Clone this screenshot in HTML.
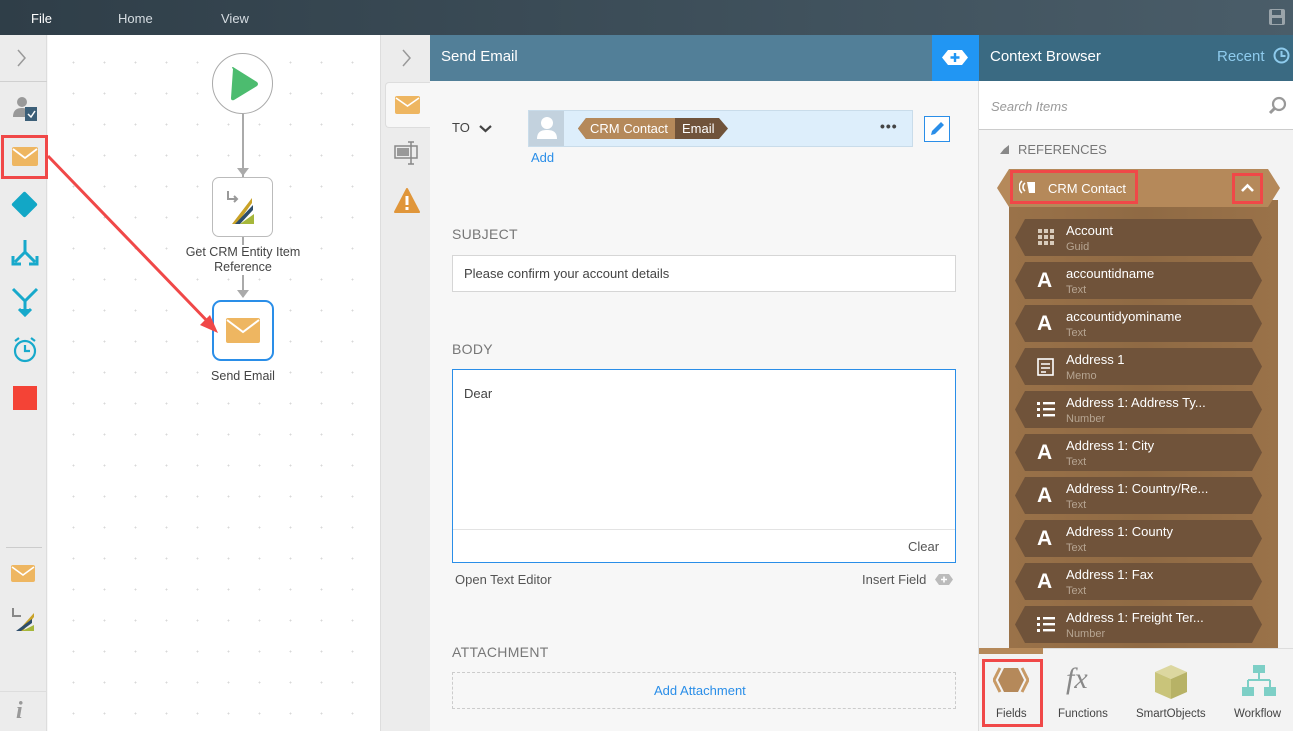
<!DOCTYPE html>
<html><head><meta charset="utf-8"><style>
*{margin:0;padding:0;box-sizing:border-box}
body{width:1293px;height:731px;overflow:hidden;position:relative;font-family:"Liberation Sans",sans-serif;font-size:13px;color:#333;background:#f7f7f7}
.a{position:absolute}
.top{left:0;top:0;width:1293px;height:35px;background:linear-gradient(90deg,#2f3e48,#4a5d69)}
.top span{position:absolute;top:11px;color:#d6dde2;font-size:13px}
.item{position:absolute;left:1015px;width:247px;height:37px;background:#70533a;clip-path:polygon(10px 0,237px 0,247px 50%,237px 100%,10px 100%,0 50%)}
.item .t{position:absolute;left:51px;top:4px;color:#fff;font-size:13px}
.item .s{position:absolute;left:51px;top:22px;color:#b6a592;font-size:11px}
.item .A{position:absolute;left:22px;top:7px;color:#fff;font-weight:bold;font-size:21px}
.lbl{position:absolute;color:#777;font-size:14px;letter-spacing:.3px}
.red{position:absolute;border:3px solid #f04848}
</style></head><body>
<div class="a top"><span style="left:31px;color:#fff">File</span><span style="left:118px">Home</span><span style="left:221px">View</span>
<svg class="a" style="left:1268px;top:8px" width="18" height="18"><rect x="1" y="1" width="16" height="16" rx="2" fill="#9aa4aa"/><rect x="4" y="2" width="9" height="5" fill="#4a5d69"/><rect x="4" y="10" width="10" height="6" fill="#4a5d69"/></svg></div>

<!-- left toolbar -->
<div class="a" style="left:0;top:35px;width:47px;height:696px;background:#ececec;border-right:1px solid #ddd"></div>
<div class="a" style="left:0;top:81px;width:47px;height:1px;background:#d0d0d0"></div>
<svg class="a" style="left:17px;top:49px" width="10" height="18"><path d="M1 1l7 8-7 8" stroke="#999" stroke-width="1.5" fill="none"/></svg>
<svg class="a" style="left:11px;top:95px" width="28" height="28"><circle cx="11" cy="7" r="5" fill="#999"/><path d="M2 22c0-7 4-9 9-9s8 2 8 9z" fill="#999"/><rect x="14" y="12" width="12" height="14" fill="#3c5f78"/><path d="M17 19l3 3 4-6" stroke="#fff" stroke-width="1.5" fill="none"/></svg>
<div class="red" style="left:1px;top:135px;width:47px;height:44px"></div>
<svg class="a" style="left:12px;top:147px" width="26" height="19"><rect width="26" height="19" rx="2" fill="#eeb661"/><path d="M1 2l12 9 12-9" stroke="#fff" stroke-width="1.8" fill="none"/></svg>
<div class="a" style="left:15px;top:195px;width:19px;height:19px;background:#12a7c6;transform:rotate(45deg);border-radius:2px"></div>
<svg class="a" style="left:10px;top:240px" width="30" height="28" fill="none" stroke="#17a9cb" stroke-width="3"><path d="M15 0v12l-10 10M15 12l10 10"/><path d="M3 16v8h8M27 16v8h-8"/></svg>
<svg class="a" style="left:10px;top:287px" width="30" height="30" fill="none" stroke="#17a9cb" stroke-width="3"><path d="M3 2l12 12 12-12M15 14v10"/><path d="M9 22l6 6 6-6" fill="#17a9cb"/></svg>
<svg class="a" style="left:12px;top:336px" width="28" height="28" fill="none" stroke="#17a9cb" stroke-width="2.2"><circle cx="13" cy="15" r="10"/><path d="M13 9v6h5M3 5l4-3M23 5l-4-3"/></svg>
<div class="a" style="left:13px;top:386px;width:24px;height:24px;background:#f44336"></div>
<div class="a" style="left:6px;top:547px;width:36px;height:1px;background:#ccc"></div>
<svg class="a" style="left:11px;top:565px" width="24" height="17"><rect width="24" height="17" rx="2" fill="#eeb661"/><path d="M1 2l11 8 11-8" stroke="#fff" stroke-width="1.6" fill="none"/></svg>
<svg class="a" style="left:10px;top:606px" width="26" height="26"><path d="M3 2v8h8" stroke="#888" stroke-width="2" fill="none"/><path d="M8 25L24 7v4L13 25z" fill="#c9a227"/><path d="M6 25L22 13v4L11 25z" fill="#2d4d6b"/><path d="M12 25l12-6v6z" fill="#a6b73a"/></svg>
<div class="a" style="left:0;top:691px;width:47px;height:1px;background:#ddd"></div>
<div class="a" style="left:16px;top:698px;color:#999;font-size:24px;font-style:italic;font-family:'Liberation Serif',serif;font-weight:bold">i</div>

<!-- canvas -->
<div class="a" style="left:48px;top:35px;width:332px;height:696px;background-color:#fff;background-image:radial-gradient(#d8d8d8 0.8px,transparent 1px);background-size:31px 31px;background-position:10px 12px"></div>
<div class="a" style="left:212px;top:53px;width:61px;height:61px;border:1px solid #aaa;border-radius:50%;background:#fff"></div>
<svg class="a" style="left:230px;top:66px" width="30" height="36"><path d="M3 3Q1 1 3 1L27 16q2 2 0 4L4 34q-3 1-3-2z" fill="#4cbc6f"/></svg>
<div class="a" style="left:242px;top:114px;width:2px;height:64px;background:#aaa"></div>
<div class="a" style="left:237px;top:168px;border:6px solid transparent;border-top:8px solid #aaa"></div>
<div class="a" style="left:212px;top:177px;width:61px;height:60px;border:1px solid #bbb;border-radius:7px;background:#fff"></div>
<svg class="a" style="left:225px;top:190px" width="36" height="36"><path d="M3 1v8h8M9 6l3 3-3 3" stroke="#999" stroke-width="2" fill="none"/><path d="M7 34L27 8v5L12 34z" fill="#c9a227"/><path d="M10 34L28 15v5L15 34z" fill="#2d4d6b"/><path d="M15 34l14-10v10z" fill="#a6b73a"/></svg>
<div class="a" style="left:160px;top:245px;width:166px;text-align:center;color:#444;font-size:12.5px;line-height:15px">Get CRM Entity Item<br>Reference</div>
<div class="a" style="left:242px;top:237px;width:2px;height:8px;background:#aaa"></div>
<div class="a" style="left:242px;top:275px;width:2px;height:22px;background:#aaa"></div>
<div class="a" style="left:237px;top:290px;border:6px solid transparent;border-top:8px solid #aaa"></div>
<div class="a" style="left:212px;top:300px;width:62px;height:61px;border:2px solid #2a8ee8;border-radius:9px;background:#fff"></div>
<svg class="a" style="left:226px;top:318px" width="34" height="25"><rect width="34" height="25" rx="2" fill="#eeb661"/><path d="M1 2l16 12 16-12" stroke="#fff" stroke-width="2" fill="none"/></svg>
<div class="a" style="left:180px;top:369px;width:126px;text-align:center;color:#444;font-size:12.5px">Send Email</div>
<svg class="a" style="left:40px;top:150px" width="180" height="190"><path d="M8 6L172 176" stroke="#f04848" stroke-width="3"/><path d="M178 183l-18-8 10-10z" fill="#f04848"/></svg>

<!-- right strip -->
<div class="a" style="left:380px;top:35px;width:50px;height:696px;background:#ececec;border-left:1px solid #ddd"></div>
<svg class="a" style="left:402px;top:49px" width="10" height="18"><path d="M1 1l7 8-7 8" stroke="#999" stroke-width="1.5" fill="none"/></svg>
<div class="a" style="left:385px;top:82px;width:46px;height:46px;background:#f7f7f7;border:1px solid #ddd;border-right:none;border-radius:4px 0 0 4px"></div>
<svg class="a" style="left:395px;top:96px" width="25" height="18"><rect width="25" height="18" rx="2" fill="#eeb661"/><path d="M1 2l11.5 8 11.5-8" stroke="#fff" stroke-width="1.6" fill="none"/></svg>
<svg class="a" style="left:394px;top:141px" width="26" height="24" fill="none" stroke="#888" stroke-width="1.5"><rect x="1" y="5" width="22" height="12"/><rect x="3" y="7" width="12" height="8" fill="#999" stroke="none"/><path d="M17 1v22M14 1h6M14 23h6"/></svg>
<svg class="a" style="left:394px;top:188px" width="26" height="26"><path d="M13 1L25 24H1z" fill="#e0963a" stroke="#e0963a" stroke-linejoin="round" stroke-width="2"/><rect x="11.5" y="8" width="3" height="9" fill="#fff"/><rect x="11.5" y="19" width="3" height="3" fill="#fff"/></svg>

<!-- send email panel -->
<div class="a" style="left:430px;top:35px;width:502px;height:46px;background:#527f98"></div>
<div class="a" style="left:441px;top:48px;color:#fff;font-size:15px">Send Email</div>
<div class="a" style="left:932px;top:35px;width:47px;height:46px;background:#2196f3"></div>
<svg class="a" style="left:942px;top:50px" width="26" height="15"><path d="M6 0h14l6 7.5-6 7.5H6L0 7.5z" fill="#fff"/><path d="M13 3v9M8.5 7.5h9" stroke="#2196f3" stroke-width="2.4"/></svg>
<div class="a" style="left:430px;top:81px;width:549px;height:650px;background:#f7f7f7;border-right:1px solid #ddd"></div>
<div class="a" style="left:452px;top:120px;font-size:13px;color:#444">TO</div>
<svg class="a" style="left:478px;top:124px" width="15" height="10"><path d="M2 2l5.5 5 5.5-5" stroke="#444" stroke-width="2.2" fill="none"/></svg>
<div class="a" style="left:528px;top:110px;width:385px;height:37px;background:#ddeefb;border:1px solid #c9dcea"></div>
<div class="a" style="left:529px;top:111px;width:35px;height:35px;background:#c3d2de"></div>
<svg class="a" style="left:535px;top:115px" width="24" height="26"><circle cx="12" cy="8" r="6" fill="#fff"/><path d="M2 24c0-7 4-9 10-9s10 2 10 9z" fill="#fff"/></svg>
<div class="a" style="left:578px;top:118px;width:150px;height:21px;background:#70533a;clip-path:polygon(8px 0,141px 0,150px 50%,141px 100%,8px 100%,0 50%)"></div>
<div class="a" style="left:578px;top:118px;width:97px;height:21px;background:#b5895a;clip-path:polygon(8px 0,97px 0,97px 100%,8px 100%,0 50%)"></div>
<div class="a" style="left:590px;top:121px;color:#fff;font-size:13px">CRM Contact</div>
<div class="a" style="left:682px;top:121px;color:#fff;font-size:13px">Email</div>
<div class="a" style="left:880px;top:118px;color:#444;font-size:14px;font-weight:bold;letter-spacing:1px">•••</div>
<div class="a" style="left:924px;top:116px;width:26px;height:26px;border:1px solid #2a8ee8;background:#fff"></div>
<svg class="a" style="left:928px;top:119px" width="19" height="19"><path d="M3 16l1-4L13 3l3 3-9 9z" fill="#2a8ee8"/></svg>
<div class="a" style="left:531px;top:150px;color:#2a8ee8;font-size:13px">Add</div>
<div class="lbl" style="left:452px;top:226px">SUBJECT</div>
<div class="a" style="left:452px;top:255px;width:504px;height:37px;background:#fff;border:1px solid #d6d6d6"></div>
<div class="a" style="left:464px;top:266px;color:#444">Please confirm your account details</div>
<div class="lbl" style="left:452px;top:341px">BODY</div>
<div class="a" style="left:452px;top:369px;width:504px;height:194px;background:#fff;border:1px solid #2a8ee8"></div>
<div class="a" style="left:453px;top:529px;width:502px;height:1px;background:#e3e3e3"></div>
<div class="a" style="left:464px;top:386px;color:#444">Dear</div>
<div class="a" style="left:908px;top:539px;color:#555">Clear</div>
<div class="a" style="left:455px;top:572px;color:#555">Open Text Editor</div>
<div class="a" style="left:862px;top:572px;color:#555">Insert Field</div>
<svg class="a" style="left:935px;top:574px" width="18" height="11"><path d="M4 0h10l4 5.5-4 5.5H4L0 5.5z" fill="#bbb"/><path d="M9 2.5v6M6 5.5h6" stroke="#fff" stroke-width="1.6"/></svg>
<div class="lbl" style="left:452px;top:644px">ATTACHMENT</div>
<div class="a" style="left:452px;top:672px;width:504px;height:37px;border:1px dashed #ccc"></div>
<div class="a" style="left:654px;top:683px;color:#2a8ee8">Add Attachment</div>

<!-- context browser -->
<div class="a" style="left:979px;top:35px;width:314px;height:46px;background:#3a6a82"></div>
<div class="a" style="left:990px;top:48px;color:#fff;font-size:15px">Context Browser</div>
<div class="a" style="left:1217px;top:48px;color:#8ecbed;font-size:15px">Recent</div>
<svg class="a" style="left:1273px;top:47px" width="17" height="17"><circle cx="8.5" cy="8.5" r="7" fill="none" stroke="#8ecbed" stroke-width="2"/><path d="M8.5 4v5h4" stroke="#8ecbed" stroke-width="2" fill="none"/></svg>
<div class="a" style="left:979px;top:81px;width:314px;height:49px;background:#fff;border-bottom:1px solid #ccc"></div>
<div class="a" style="left:991px;top:99px;color:#999;font-style:italic;font-size:13px">Search Items</div>
<svg class="a" style="left:1268px;top:96px" width="20" height="20"><circle cx="11" cy="8" r="6" fill="none" stroke="#999" stroke-width="2.2"/><path d="M7 12l-5 5" stroke="#999" stroke-width="3"/></svg>
<div class="a" style="left:979px;top:130px;width:314px;height:518px;background:#f3f3f3"></div>
<div class="a" style="left:1000px;top:145px;border:4px solid transparent;border-right:5px solid #888;border-bottom:5px solid #888;width:0;height:0"></div>
<div class="a" style="left:1018px;top:142px;color:#777;font-size:13px">REFERENCES</div>
<div class="a" style="left:1009px;top:200px;width:269px;height:448px;background:linear-gradient(90deg,#9a7249,#8f6a44 50%,#9a7249)"></div>
<div class="a" style="left:997px;top:169px;width:283px;height:38px;background:#b5895a;clip-path:polygon(12px 0,271px 0,283px 50%,271px 100%,12px 100%,0 50%)"></div>
<div class="red" style="left:1010px;top:170px;width:128px;height:34px"></div>
<svg class="a" style="left:1019px;top:179px" width="20" height="16"><path d="M3 2a8 8 0 000 12M6 4a5 5 0 000 8" stroke="#fff" stroke-width="1.6" fill="none"/><path d="M8 3h8v11h-6z" fill="#fff"/></svg>
<div class="a" style="left:1048px;top:181px;color:#fff;font-size:13px">CRM Contact</div>
<div class="red" style="left:1232px;top:173px;width:31px;height:31px"></div>
<svg class="a" style="left:1240px;top:181px" width="15" height="14"><path d="M2 10l5.5-5.5L13 10" stroke="#fff" stroke-width="2.6" fill="none"/></svg>

<div class="item" style="top:219px"><svg class="a" style="left:23px;top:10px" width="17" height="17" fill="#d8cbbb"><rect x="0" y="0" width="4" height="4"/><rect x="6" y="0" width="4" height="4"/><rect x="12" y="0" width="4" height="4"/><rect x="0" y="6" width="4" height="4"/><rect x="6" y="6" width="4" height="4"/><rect x="12" y="6" width="4" height="4"/><rect x="0" y="12" width="4" height="4"/><rect x="6" y="12" width="4" height="4"/><rect x="12" y="12" width="4" height="4"/></svg><div class="t">Account</div><div class="s">Guid</div></div>
<div class="item" style="top:262px"><div class="A">A</div><div class="t">accountidname</div><div class="s">Text</div></div>
<div class="item" style="top:305px"><div class="A">A</div><div class="t">accountidyominame</div><div class="s">Text</div></div>
<div class="item" style="top:348px"><svg class="a" style="left:22px;top:9px" width="18" height="19" fill="none" stroke="#fff" stroke-width="1.6"><rect x="1" y="2" width="15" height="16"/><path d="M4 7h9M4 11h9M4 15h5"/></svg><div class="t">Address 1</div><div class="s">Memo</div></div>
<div class="item" style="top:391px"><svg class="a" style="left:22px;top:10px" width="18" height="17" fill="#fff"><rect x="0" y="1" width="3" height="3"/><rect x="0" y="7" width="3" height="3"/><rect x="0" y="13" width="3" height="3"/><rect x="6" y="1" width="12" height="2.4"/><rect x="6" y="7" width="12" height="2.4"/><rect x="6" y="13" width="12" height="2.4"/></svg><div class="t">Address 1: Address Ty...</div><div class="s">Number</div></div>
<div class="item" style="top:434px"><div class="A">A</div><div class="t">Address 1: City</div><div class="s">Text</div></div>
<div class="item" style="top:477px"><div class="A">A</div><div class="t">Address 1: Country/Re...</div><div class="s">Text</div></div>
<div class="item" style="top:520px"><div class="A">A</div><div class="t">Address 1: County</div><div class="s">Text</div></div>
<div class="item" style="top:563px"><div class="A">A</div><div class="t">Address 1: Fax</div><div class="s">Text</div></div>
<div class="item" style="top:606px"><svg class="a" style="left:22px;top:10px" width="18" height="17" fill="#fff"><rect x="0" y="1" width="3" height="3"/><rect x="0" y="7" width="3" height="3"/><rect x="0" y="13" width="3" height="3"/><rect x="6" y="1" width="12" height="2.4"/><rect x="6" y="7" width="12" height="2.4"/><rect x="6" y="13" width="12" height="2.4"/></svg><div class="t">Address 1: Freight Ter...</div><div class="s">Number</div></div>

<!-- bottom tabs -->
<div class="a" style="left:979px;top:648px;width:314px;height:83px;background:#f3f3f3;border-top:1px solid #ddd"></div>
<div class="a" style="left:979px;top:648px;width:64px;height:6px;background:#b5895a"></div>
<div class="red" style="left:982px;top:659px;width:61px;height:68px"></div>
<svg class="a" style="left:993px;top:667px" width="36" height="26"><path d="M7 1l-6 12 6 12" stroke="#c89a66" stroke-width="3" fill="none"/><path d="M29 1l6 12-6 12" stroke="#c89a66" stroke-width="3" fill="none"/><path d="M11 1h14l6 12-6 12H11L5 13z" fill="#b5895a"/></svg>
<div class="a" style="left:996px;top:708px;color:#444;font-size:11.5px">Fields</div>
<div class="a" style="left:1066px;top:662px;color:#888;font-size:30px;font-style:italic;font-family:'Liberation Serif',serif">fx</div>
<div class="a" style="left:1058px;top:708px;color:#444;font-size:11.5px">Functions</div>
<svg class="a" style="left:1153px;top:664px" width="36" height="36"><path d="M18 1l16 7-16 7L2 8z" fill="#dcd7a0"/><path d="M2 8l16 7v20L2 28z" fill="#c9c47a"/><path d="M34 8l-16 7v20l16-7z" fill="#b7b266"/></svg>
<div class="a" style="left:1136px;top:708px;color:#444;font-size:11.5px">SmartObjects</div>
<svg class="a" style="left:1242px;top:665px" width="34" height="34" fill="#7dcfc6"><rect x="11" y="0" width="12" height="8"/><rect x="0" y="22" width="12" height="9"/><rect x="22" y="22" width="12" height="9"/><path d="M17 8v7M6 15h22M6 15v7M28 15v7" stroke="#7dcfc6" stroke-width="2" fill="none"/></svg>
<div class="a" style="left:1234px;top:708px;color:#444;font-size:11.5px">Workflow</div>
</body></html>
